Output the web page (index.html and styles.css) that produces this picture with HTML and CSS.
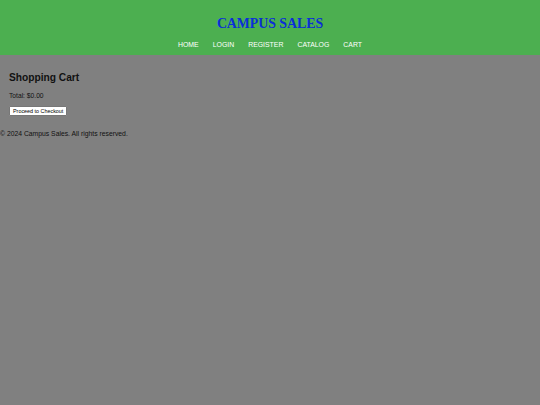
FILE: index.html
```html
<!DOCTYPE html>
<html>
<head>
<meta charset="utf-8">
<link rel="stylesheet" href="styles.css">
</head>
<body>
<header class="site-header">
  <h1 class="site-title">CAMPUS SALES</h1>
  <nav class="nav">
    <a href="#">HOME</a>
    <a href="#">LOGIN</a>
    <a href="#">REGISTER</a>
    <a href="#">CATALOG</a>
    <a href="#">CART</a>
  </nav>
</header>
<main class="content">
  <h2 class="page-title">Shopping Cart</h2>
  <p class="total">Total: $0.00</p>
  <button class="checkout">Proceed to Checkout</button>
</main>
<footer class="footer">© 2024 Campus Sales. All rights reserved.</footer>
</body>
</html>
```
FILE: styles.css
```css
html, body {
  margin: 0;
  padding: 0;
  background: #808080;
  font-family: "Liberation Sans", Arial, sans-serif;
  color: #111;
}
.site-header {
  background: #4caf50;
  height: 55px;
  display: flex;
  flex-direction: column;
  align-items: center;
  box-sizing: border-box;
  padding-top: 16px;
}
.site-title {
  margin: 0;
  font-family: "Liberation Serif", "Times New Roman", serif;
  font-size: 13.8px;
  font-weight: bold;
  color: #0a2ed8;
  line-height: 16px;
}
.nav {
  display: flex;
  gap: 14px;
  margin-top: 8px;
}
.nav a {
  color: #fff;
  text-decoration: none;
  font-size: 6.9px;
  line-height: 9px;
}
.content {
  padding: 17px 9px 0;
}
.page-title {
  margin: 0;
  font-size: 10.2px;
  font-weight: bold;
  line-height: 12px;
}
.total {
  margin: 7px 0 0;
  font-size: 6.7px;
  line-height: 9px;
}
.checkout {
  margin-top: 6px;
  font-family: "Liberation Sans", Arial, sans-serif;
  font-size: 5.4px;
  padding: 1px 3px;
  background: #fff;
  border: 1px solid #777;
  border-radius: 1px;
  line-height: 6px;
  display: block;
}
.footer {
  margin-top: 13px;
  font-size: 6.8px;
  line-height: 9px;
}
```
